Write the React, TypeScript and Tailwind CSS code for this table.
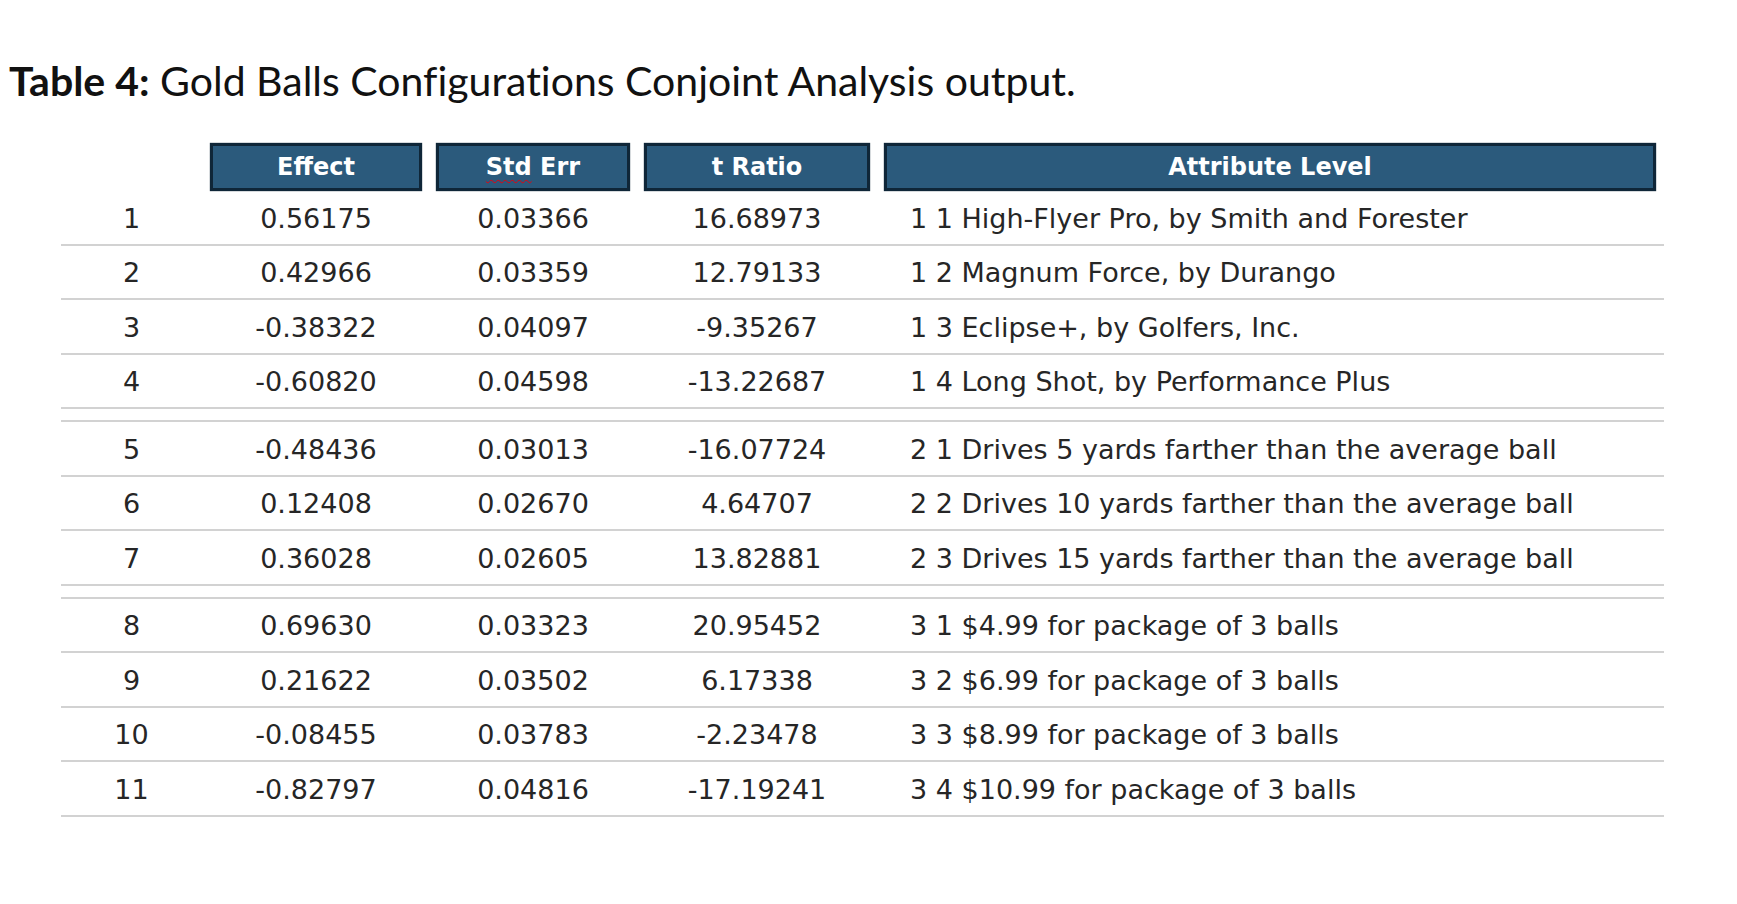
const groups = [
  [
    ["1", "0.56175", "0.03366", "16.68973", "1 1 High-Flyer Pro, by Smith and Forester"],
    ["2", "0.42966", "0.03359", "12.79133", "1 2 Magnum Force, by Durango"],
    ["3", "-0.38322", "0.04097", "-9.35267", "1 3 Eclipse+, by Golfers, Inc."],
    ["4", "-0.60820", "0.04598", "-13.22687", "1 4 Long Shot, by Performance Plus"],
  ],
  [
    ["5", "-0.48436", "0.03013", "-16.07724", "2 1 Drives 5 yards farther than the average ball"],
    ["6", "0.12408", "0.02670", "4.64707", "2 2 Drives 10 yards farther than the average ball"],
    ["7", "0.36028", "0.02605", "13.82881", "2 3 Drives 15 yards farther than the average ball"],
  ],
  [
    ["8", "0.69630", "0.03323", "20.95452", "3 1 $4.99 for package of 3 balls"],
    ["9", "0.21622", "0.03502", "6.17338", "3 2 $6.99 for package of 3 balls"],
    ["10", "-0.08455", "0.03783", "-2.23478", "3 3 $8.99 for package of 3 balls"],
    ["11", "-0.82797", "0.04816", "-17.19241", "3 4 $10.99 for package of 3 balls"],
  ],
];

const cols = "grid grid-cols-[135px_212px_194px_226px_772px] gap-x-[14px]";

function HeadCell({ children }: { children: React.ReactNode }) {
  return (
    <div className="h-[48px] flex items-center justify-center bg-[#2b5a7c] border-[3px] border-[#0f2638] text-white font-bold text-[24px] shadow-[0_0_1px_#0f2638]">
      {children}
    </div>
  );
}

export default function App() {
  return (
    <div className="bg-white min-h-screen w-full pt-[57px] font-['DejaVu_Sans',sans-serif] text-[#262626]">
      <h1 className="pl-[9px] text-[41px] leading-[48px] text-[#111] font-['Lato',sans-serif] [font-variant-ligatures:none]">
        <span className="font-bold">Table 4:</span> Gold Balls Configurations Conjoint Analysis output.
      </h1>

      <div className="ml-[61px] w-[1603px] mt-[38px]">
        <div className={cols}>
          <div></div>
          <HeadCell>Effect</HeadCell>
          <HeadCell>
            <span className="underline decoration-wavy decoration-red-600 decoration-1 underline-offset-4">Std</span>&nbsp;Err
          </HeadCell>
          <HeadCell>t Ratio</HeadCell>
          <HeadCell>Attribute Level</HeadCell>
        </div>

        {groups.map((rows, gi) => (
          <div key={gi} className={gi === 0 ? "" : "mt-[11px] border-t-2 border-[#d2d2d2]"}>
            {rows.map((r) => (
              <div key={r[0]} className={`${cols} h-[54.5px] items-center border-b-2 border-[#d2d2d2] text-[27px] pt-[3px]`}>
                <div className="text-center pl-[6px]">{r[0]}</div>
                <div className="text-center">{r[1]}</div>
                <div className="text-center">{r[2]}</div>
                <div className="text-center">{r[3]}</div>
                <div className="pl-[26px] whitespace-nowrap">{r[4]}</div>
              </div>
            ))}
          </div>
        ))}
      </div>
    </div>
  );
}
